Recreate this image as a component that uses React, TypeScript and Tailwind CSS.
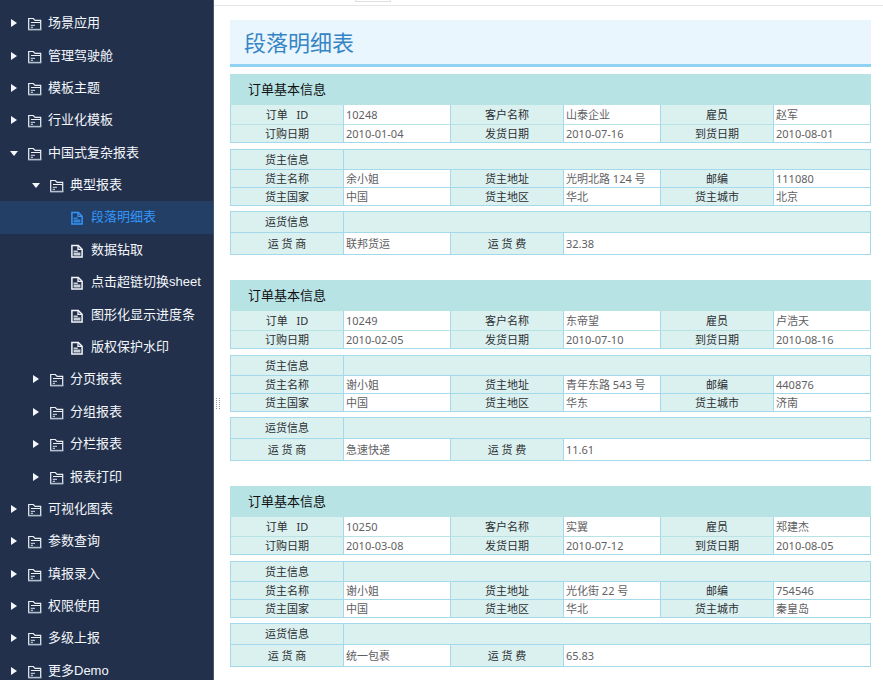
import React, { useState } from 'react';
import clsx from 'clsx';

type TreeNode = {
	label: string;
	children?: TreeNode[];
};

const tree: TreeNode[] = [
	{ label: '场景应用', children: [] },
	{ label: '管理驾驶舱', children: [] },
	{ label: '模板主题', children: [] },
	{ label: '行业化模板', children: [] },
	{
		label: '中国式复杂报表',
		children: [
			{
				label: '典型报表',
				children: [
					{ label: '段落明细表' },
					{ label: '数据钻取' },
					{ label: '点击超链切换sheet' },
					{ label: '图形化显示进度条' },
					{ label: '版权保护水印' },
				],
			},
			{ label: '分页报表', children: [] },
			{ label: '分组报表', children: [] },
			{ label: '分栏报表', children: [] },
			{ label: '报表打印', children: [] },
		],
	},
	{ label: '可视化图表', children: [] },
	{ label: '参数查询', children: [] },
	{ label: '填报录入', children: [] },
	{ label: '权限使用', children: [] },
	{ label: '多级上报', children: [] },
	{ label: '更多Demo', children: [] },
];

const orders = [
	{
		id: '10248', customer: '山泰企业', employee: '赵军',
		ordered: '2010-01-04', shipped: '2010-07-16', arrived: '2010-08-01',
		name: '余小姐', address: '光明北路 124 号', zip: '111080',
		country: '中国', region: '华北', city: '北京',
		carrier: '联邦货运', freight: '32.38',
	},
	{
		id: '10249', customer: '东帝望', employee: '卢浩天',
		ordered: '2010-02-05', shipped: '2010-07-10', arrived: '2010-08-16',
		name: '谢小姐', address: '青年东路 543 号', zip: '440876',
		country: '中国', region: '华东', city: '济南',
		carrier: '急速快递', freight: '11.61',
	},
	{
		id: '10250', customer: '实翼', employee: '郑建杰',
		ordered: '2010-03-08', shipped: '2010-07-12', arrived: '2010-08-05',
		name: '谢小姐', address: '光化街 22 号', zip: '754546',
		country: '中国', region: '华北', city: '秦皇岛',
		carrier: '统一包裹', freight: '65.83',
	},
];

type Order = (typeof orders)[number];

// Отступы по уровню вложенности
const indents = ['pl-2', 'pl-[30px]', 'pl-[51px]'];

function Arrow({ open }: { open: boolean }) {
	return (
		<svg width="12" height="12" viewBox="0 0 12 12" fill="#f4f7fb">
			{open ? <path d="M2 4h8L6 9z" /> : <path d="M3 2l6 4-6 4z" />}
		</svg>
	);
}

function FolderIcon() {
	return (
		<svg width="14" height="14" viewBox="0 0 14 14" fill="none">
			<path d="M.7 13V1.5h4.6l1.8 1.8h5.6V13" stroke="#eef2f7" strokeWidth="1.2" />
			<path d="M3 5.5h9.5" stroke="#eef2f7" strokeWidth="1" />
			<path d="M2.8 8.4h4.2M2.8 10.4h2.2" stroke="#b4bfce" strokeWidth="1.2" />
			<path d="M.2 12.6h13.1" stroke="#b4bfce" strokeWidth="1.6" />
		</svg>
	);
}

function FileIcon() {
	return (
		<svg width="12" height="14" viewBox="0 0 12 14" fill="none" stroke="currentColor">
			<path d="M.9 1.4h6.4l3.8 3.8v7.9H.9z" strokeWidth="1.5" />
			<path d="M7 1.6v3.8h3.8" strokeWidth="1.3" />
			<path d="M2.6 7.3h4.2M2.6 9.2h6.8M2.6 10.8h6.8" strokeWidth="1.5" opacity=".8" />
		</svg>
	);
}

function ReportTable({ children, topBorder }: { children: React.ReactNode; topBorder?: boolean }) {
	return (
		<table
			className={clsx(
				'w-full table-fixed border-separate border-spacing-0 border-l border-[#a3d9ea] text-[11px] leading-4',
				topBorder && 'border-t',
			)}
		>
			<colgroup>
				<col className="w-[113px]" />
				<col className="w-[107px]" />
				<col className="w-[113px]" />
				<col />
				<col className="w-[113px]" />
				<col />
			</colgroup>
			<tbody>{children}</tbody>
		</table>
	);
}

function Label({ children, green }: { children: React.ReactNode; green?: boolean }) {
	return (
		<th
			className={clsx(
				'border-r border-b border-r-[#a3d9ea] bg-[#dbf1ef] p-0 text-center align-middle font-normal whitespace-pre text-[#2b2f33]',
				green ? 'border-b-[#b7e3e4]' : 'border-b-[#a3d9ea]',
			)}
		>
			{children}
		</th>
	);
}

function Value({ children, green, span }: { children: React.ReactNode; green?: boolean; span?: number }) {
	return (
		<td
			colSpan={span}
			className={clsx(
				'border-r border-b border-r-[#a3d9ea] py-0 pr-0 pl-0.5 align-middle whitespace-nowrap text-[#5f6163]',
				green ? 'border-b-[#b7e3e4]' : 'border-b-[#a3d9ea]',
			)}
		>
			{children}
		</td>
	);
}

function Filler() {
	return <td colSpan={5} className="border-r border-b border-[#a3d9ea] bg-[#dbf1ef] p-0" />;
}

function OrderBlock({ order }: { order: Order }) {
	return (
		<section>
			<h2 className="flex h-[31px] items-center bg-[#b7e3e4] pl-[18px] text-[13px] text-[#111]">订单基本信息</h2>
			<ReportTable>
				<tr className="h-5">
					<Label green>{'订单   ID'}</Label>
					<Value green>{order.id}</Value>
					<Label green>客户名称</Label>
					<Value green>{order.customer}</Value>
					<Label green>雇员</Label>
					<Value green>{order.employee}</Value>
				</tr>
				<tr className="h-[18px]">
					<Label>订购日期</Label>
					<Value>{order.ordered}</Value>
					<Label>发货日期</Label>
					<Value>{order.shipped}</Value>
					<Label>到货日期</Label>
					<Value>{order.arrived}</Value>
				</tr>
			</ReportTable>

			<div className="mt-1.5">
				<ReportTable topBorder>
					<tr className="h-5">
						<Label>货主信息</Label>
						<Filler />
					</tr>
					<tr className="h-[18px]">
						<Label>货主名称</Label>
						<Value>{order.name}</Value>
						<Label>货主地址</Label>
						<Value>{order.address}</Value>
						<Label>邮编</Label>
						<Value>{order.zip}</Value>
					</tr>
					<tr className="h-[18px]">
						<Label>货主国家</Label>
						<Value>{order.country}</Value>
						<Label>货主地区</Label>
						<Value>{order.region}</Value>
						<Label>货主城市</Label>
						<Value>{order.city}</Value>
					</tr>
				</ReportTable>
			</div>

			<div className="mt-[5px]">
				<ReportTable topBorder>
					<tr className="h-[21px]">
						<Label>运货信息</Label>
						<Filler />
					</tr>
					<tr className="h-[22px]">
						<Label>运 货 商</Label>
						<Value>{order.carrier}</Value>
						<Label>运 货 费</Label>
						<Value span={3}>{order.freight}</Value>
					</tr>
				</ReportTable>
			</div>
		</section>
	);
}

export default function App() {
	const [active, setActive] = useState('段落明细表');
	const [opened, setOpened] = useState<string[]>(['中国式复杂报表', '典型报表']);

	const handleClick = (node: TreeNode) => {
		if (!node.children) {
			setActive(node.label);
			return;
		}
		setOpened((prev) =>
			prev.includes(node.label) ? prev.filter((l) => l !== node.label) : [...prev, node.label],
		);
	};

	const renderNodes = (nodes: TreeNode[], level: number): React.ReactNode =>
		nodes.map((node) => {
			const isOpen = opened.includes(node.label);
			return (
				<React.Fragment key={node.label}>
					<li className="flex">
						<button
							type="button"
							onClick={() => handleClick(node)}
							className={clsx(
								'flex w-full items-center text-left text-[13px] leading-5 whitespace-nowrap',
								indents[level],
								node.label === active ? 'bg-[#243f66] text-[#3296fa]' : 'text-[#f4f7fb]',
							)}
						>
							<span className="w-5 shrink-0">{node.children && <Arrow open={isOpen} />}</span>
							<span className="w-5 shrink-0 pt-0.5">{node.children ? <FolderIcon /> : <FileIcon />}</span>
							<span>{node.label}</span>
						</button>
					</li>
					{isOpen && node.children && renderNodes(node.children, level + 1)}
				</React.Fragment>
			);
		});

	return (
		<div className="flex h-screen overflow-hidden bg-white font-['Noto_Sans','Noto_Sans_CJK_SC',sans-serif]">
			{/* Дерево отчётов */}
			<aside className="w-[214px] shrink-0 overflow-hidden border-r border-[#4a566c] bg-[#22304c] pt-[7px] font-['Liberation_Sans','Noto_Sans_CJK_SC',sans-serif]">
				<ul className="grid h-screen auto-rows-fr">{renderNodes(tree, 0)}</ul>
			</aside>

			<div className="flex min-w-0 flex-1 flex-col">
				{/* Нижний край панели вкладок */}
				<div className="h-1.5 shrink-0 border-b border-[#e6e6e6] pl-[141px]">
					<div className="h-0.5 w-9 border-x border-b border-[#e0e0e0]"></div>
				</div>

				<div className="flex min-h-0 flex-1">
					{/* Разделитель */}
					<div className="flex w-2 shrink-0 cursor-col-resize justify-center pt-[392px]">
						<svg width="4" height="12" viewBox="0 0 4 12" fill="#999">
							{[0, 2, 4, 6, 8, 10].map((y) => (
								<React.Fragment key={y}>
									<rect x="0" y={y} width="1" height="1" />
									<rect x="3" y={y} width="1" height="1" />
								</React.Fragment>
							))}
						</svg>
					</div>

					<main className="min-w-0 flex-1 overflow-hidden pt-3.5 pr-3 pl-2">
						<h1 className="flex h-[47px] items-center border-b-3 border-[#90d2f4] bg-[#eaf6fd] pl-3.5 text-[22px] text-[#3585c5]">
							段落明细表
						</h1>
						<div className="mt-[7px] flex flex-col gap-[25px]">
							{orders.map((order) => (
								<OrderBlock key={order.id} order={order} />
							))}
						</div>
					</main>
				</div>
			</div>
		</div>
	);
}
